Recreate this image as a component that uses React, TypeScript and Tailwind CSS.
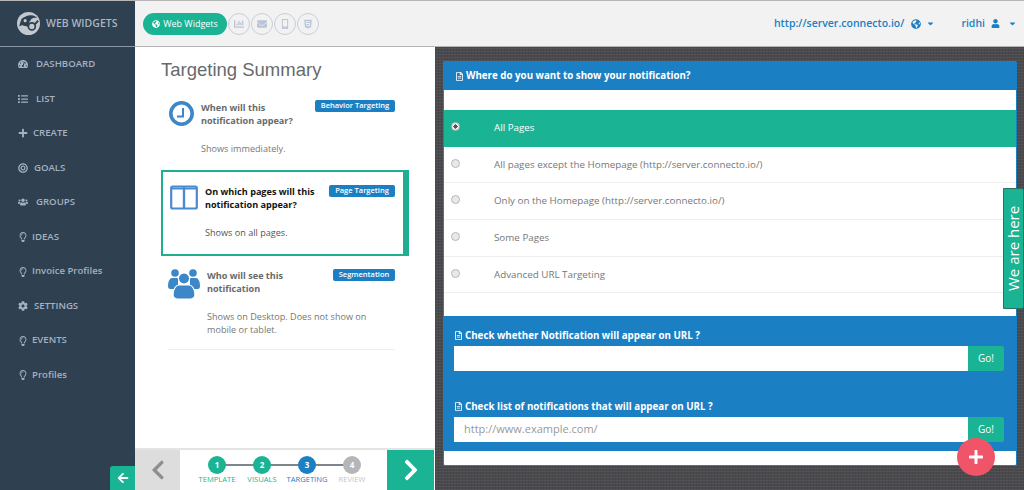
import React from 'react';
import {
  FaArrowLeft, FaBullseye, FaCaretDown, FaChartBar, FaChevronLeft, FaChevronRight, FaCog,
  FaEnvelope, FaGlobeAmericas, FaHtml5, FaList, FaMobileAlt, FaPlus,
  FaRegFileAlt, FaRegLightbulb, FaTachometerAlt, FaUser, FaUsers,
} from 'react-icons/fa';

const NAV = [
  { label: 'DASHBOARD', icon: FaTachometerAlt, gap: 'gap-[8px]' },
  { label: 'LIST', icon: FaList, gap: 'gap-[8px]' },
  { label: 'CREATE', icon: FaPlus, gap: 'gap-[5px]' },
  { label: 'GOALS', icon: FaBullseye, gap: 'gap-[6px]' },
  { label: 'GROUPS', icon: FaUsers, gap: 'gap-[8px]' },
  { label: 'IDEAS', icon: FaRegLightbulb, gap: 'gap-[4px]' },
  { label: 'Invoice Profiles', icon: FaRegLightbulb, gap: 'gap-[4px]' },
  { label: 'SETTINGS', icon: FaCog, gap: 'gap-[6px]' },
  { label: 'EVENTS', icon: FaRegLightbulb, gap: 'gap-[4px]' },
  { label: 'Profiles', icon: FaRegLightbulb, gap: 'gap-[4px]' },
];

const OPTIONS = [
  'All Pages',
  'All pages except the Homepage (http://server.connecto.io/)',
  'Only on the Homepage (http://server.connecto.io/)',
  'Some Pages',
  'Advanced URL Targeting',
];

const STEPS = [
  { n: 1, label: 'TEMPLATE', circle: 'bg-[#1ab394]', text: 'text-[#1ab394]' },
  { n: 2, label: 'VISUALS', circle: 'bg-[#1ab394]', text: 'text-[#1ab394]' },
  { n: 3, label: 'TARGETING', circle: 'bg-[#1b7fc4]', text: 'text-[#1b7fc4]' },
  { n: 4, label: 'REVIEW', circle: 'bg-[#b4b6ba]', text: 'text-[#c4c6ca]' },
];

const Logo = () => (
  <svg width="23" height="23" viewBox="0 0 24 24" className="shrink-0">
    <circle cx="12" cy="12" r="12" fill="#c3c8ce" />
    <path d="M2.5 15C3 8 9 3 15 3.5c3 .3 5 1.5 6 3-3-1-6 0-7 2.5" fill="#2f4050" />
    <circle cx="8.5" cy="10" r="4.6" fill="#2f4050" />
    <path d="M8 13c3 1 4 2 6 2s5-2 8-6" fill="none" stroke="#2f4050" strokeWidth="2" />
    <circle cx="15.5" cy="15" r="3.6" fill="#c3c8ce" stroke="#2f4050" strokeWidth="1.8" />
    <circle cx="8.5" cy="9" r="1.6" fill="#c3c8ce" />
  </svg>
);

const ClockIcon = () => (
  <svg width="25" height="25" viewBox="0 0 25 25" className="shrink-0">
    <circle cx="12.5" cy="12.5" r="10.7" fill="#fff" stroke="#3b87c8" strokeWidth="3.6" />
    <path d="M8 15.6h6V7" fill="none" stroke="#3b87c8" strokeWidth="2" />
  </svg>
);

const PanesIcon = () => (
  <svg width="28" height="25" viewBox="0 0 28 25" className="shrink-0">
    <rect x="1.2" y="1.5" width="25.6" height="22" rx="1.5" fill="#fff" stroke="#4a8ad0" strokeWidth="2.2" />
    <path d="M14 2v21" stroke="#4a8ad0" strokeWidth="2.4" />
    <path d="M1 3.5h26" stroke="#4a8ad0" strokeWidth="2" />
  </svg>
);

const PeopleIcon = () => (
  <svg width="32" height="30" viewBox="0 0 32 30" className="shrink-0">
    <g fill="#3b87c8">
      <circle cx="7" cy="4" r="3.8" />
      <circle cx="25" cy="4" r="3.8" />
      <path d="M0 17c0-5 2-8 4-8h6v11H2c-1 0-2-1-2-3z" />
      <path d="M32 17c0-5-2-8-4-8h-6v11h8c1 0 2-1 2-3z" />
    </g>
    <g fill="#3b87c8" stroke="#fff" strokeWidth="1.2">
      <circle cx="16" cy="9.5" r="5.6" />
      <path d="M5 26c0-6 3-10 6-10h10c3 0 6 4 6 10 0 2-2 4-4 4H9c-2 0-4-2-4-4z" />
    </g>
  </svg>
);

const Sidebar = () => (
  <aside className="w-[135px] shrink-0 bg-[#2f4050] flex flex-col">
    <div className="h-[46px] flex items-center pl-[17px] gap-[6px] border-b border-[#8a96a3] text-[#a9b5c3] text-[10.5px] font-semibold">
      <Logo />
      <span>WEB WIDGETS</span>
    </div>
    <nav className="flex flex-col">
      {NAV.map(({ label, icon: Icon, gap }) => (
        <div key={label} className={`h-[34.55px] flex items-center pl-[18px] text-[9.6px] font-semibold text-[#a3b1c2] ${gap}`}>
          <Icon size={10} className="shrink-0" />
          <span>{label}</span>
        </div>
      ))}
    </nav>
  </aside>
);

const Topbar = () => (
  <header className="h-[46px] shrink-0 bg-[#f2f2f2] border-b border-[#b5b5b5] flex items-center justify-between pl-[8px] pr-[7px]">
    <div className="flex items-center gap-px">
      <div className="h-[22px] w-[84px] rounded-full bg-[#1ab394] text-white text-[9px] flex items-center justify-center gap-[3px]">
        <FaGlobeAmericas size={8} />
        <span>Web Widgets</span>
      </div>
      {[FaChartBar, FaEnvelope, FaMobileAlt, FaHtml5].map((Icon, i) => (
        <div key={i} className="w-[22px] h-[22px] rounded-full border border-[#c8ced8] text-[#b9c4d6] flex items-center justify-center">
          <Icon size={10} />
        </div>
      ))}
    </div>
    <div className="flex items-center text-[#1b7fc4] text-[10.5px] font-semibold">
      <span>http://server.connecto.io/</span>
      <FaGlobeAmericas size={10} className="ml-[7px]" />
      <FaCaretDown size={9} className="ml-[5px]" />
      <span className="ml-[26px]">ridhi</span>
      <FaUser size={9} className="ml-[6px]" />
      <FaCaretDown size={9} className="ml-[8px]" />
    </div>
  </header>
);

const Badge = ({ children, className }: { children: React.ReactNode; className: string }) => (
  <span className={`h-[12px] rounded-[2px] bg-[#1b7fc4] text-white text-[7.5px] font-semibold flex items-center justify-center shrink-0 ${className}`}>
    {children}
  </span>
);

const Summary = () => (
  <div className="flex-1 min-h-0 flex flex-col pt-[12px] pl-[26px] pr-[26px]">
    <h2 className="text-[18.5px] leading-[22px] text-[#676a6c] font-['Liberation_Sans',sans-serif]">Targeting Summary</h2>

    <div className="flex mt-[10px] pl-[8px] pr-[14px] h-[79px] pt-[10px]">
      <ClockIcon />
      <div className="ml-[7px] flex-1">
        <div className="flex justify-between">
          <p className="text-[9.1px] leading-[13px] font-bold text-[#676a6c]">When will this<br />notification appear?</p>
          <Badge className="w-[80px] -mt-[1px]">Behavior Targeting</Badge>
        </div>
        <p className="text-[9.1px] leading-[13px] text-[#777] mt-[15px]">Shows immediately.</p>
      </div>
    </div>

    <div className="w-[248px] h-[86px] border-2 border-r-[6px] border-[#1fae90] flex pl-[7px] pt-[13px] pr-[8px]">
      <PanesIcon />
      <div className="ml-[7px] flex-1">
        <div className="flex justify-between">
          <p className="text-[9.1px] leading-[13px] font-bold text-[#111]">On which pages will this<br />notification appear?</p>
          <Badge className="w-[66px]">Page Targeting</Badge>
        </div>
        <p className="text-[9.1px] leading-[13px] text-[#555] mt-[15px]">Shows on all pages.</p>
      </div>
    </div>

    <div className="w-[227px] ml-[7px] mt-[13px] pb-[13px] border-b border-[#eeeeee] flex">
      <PeopleIcon />
      <div className="ml-[7px] flex-1">
        <div className="flex justify-between">
          <p className="text-[9.1px] leading-[13px] font-bold text-[#676a6c]">Who will see this<br />notification</p>
          <Badge className="w-[62px]">Segmentation</Badge>
        </div>
        <p className="text-[9.1px] leading-[13px] text-[#777] mt-[15px]">Shows on Desktop. Does not show on<br />mobile or tablet.</p>
      </div>
    </div>
  </div>
);

const Stepper = () => (
  <div className="h-[42px] shrink-0 flex border-t-2 border-[#e4e4e4] bg-white pr-px">
    <div className="w-[45px] bg-[#dddddd] text-[#8f8f8f] flex items-center justify-center">
      <FaChevronLeft size={22} />
    </div>
    <div className="flex-1 flex justify-center pl-[2px] relative">
      {STEPS.map((s, i) => (
        <div key={s.n} className="w-[45px] relative flex flex-col items-center pt-[6px]">
          {i < 3 && <div className="absolute top-[14px] left-[22px] w-[45px] h-[2px] bg-[#7d858d]" />}
          <div className={`relative w-[18px] h-[18px] rounded-full text-white text-[8px] font-bold flex items-center justify-center ${s.circle}`}>{s.n}</div>
          <span className={`text-[7.6px] leading-[10px] ${s.text}`}>{s.label}</span>
        </div>
      ))}
    </div>
    <div className="w-[47px] bg-[#1ab394] text-white flex items-center justify-center">
      <FaChevronRight size={24} />
    </div>
  </div>
);

const UrlCheck = ({ title, placeholder }: { title: string; placeholder?: string }) => (
  <div>
    <h3 className="h-[14px] flex items-center gap-[2px] text-white text-[9.75px] font-bold">
      <FaRegFileAlt size={9} />
      {title}
    </h3>
    <div className="flex h-[25px] mt-[3px]">
      <input readOnly placeholder={placeholder} className="flex-1 bg-white px-[10px] text-[11px] placeholder:text-[#999] outline-none" />
      <button className="w-[36px] bg-[#1ab394] text-white text-[10px] rounded-r-[2px]">Go!</button>
    </div>
  </div>
);

const TargetCard = () => (
  <section className="bg-white border border-[#1b7fc4] rounded-[2px] h-[405px] flex flex-col">
    <h3 className="h-[28px] shrink-0 bg-[#1b7fc4] text-white text-[9.75px] font-bold flex items-center gap-[2px] pl-[11px]">
      <FaRegFileAlt size={9} />
      Where do you want to show your notification?
    </h3>
    <div className="h-[20px] shrink-0" />
    {OPTIONS.map((o, i) => (
      <label key={o} className={`h-[36.7px] shrink-0 flex text-[9.8px] border-b ${i === 0 ? 'bg-[#1ab394] text-white border-[#1ab394]' : 'text-[#777] border-[#eeeeee]'}`}>
        <span className="w-[50px] pl-[7px] pt-[12px]">
          <span className={`block w-[9px] h-[9px] rounded-full border border-[#b8b8b8] ${i === 0 ? 'bg-[radial-gradient(circle,#555_40%,#eee_45%)]' : 'bg-[#e8e8e8]'}`} />
        </span>
        <span className="pt-[11px]">{o}</span>
      </label>
    ))}
    <div className="h-[22.5px] shrink-0" />
    <div className="h-[135px] shrink-0 bg-[#1b7fc4] pl-[10px] pr-[12px] pt-[13px] flex flex-col gap-[29px]">
      <UrlCheck title="Check whether Notification will appear on URL ?" />
      <UrlCheck title="Check list of notifications that will appear on URL ?" placeholder="http://www.example.com/" />
    </div>
  </section>
);

export default function App() {
  return (
    <div className="relative w-[1024px] h-[490px] overflow-hidden flex border-t border-[#b5b5b5] font-['Open_Sans',sans-serif]">
      <Sidebar />
      <div className="flex-1 min-w-0 flex flex-col">
        <Topbar />
        <div className="flex-1 min-h-0 flex">
          <div className="w-[300px] shrink-0 bg-white flex flex-col">
            <Summary />
            <Stepper />
          </div>
          <div className="flex-1 bg-[#4a4a4e] bg-[repeating-linear-gradient(0deg,rgba(255,255,255,0.05)_0_1px,transparent_1px_3px),repeating-linear-gradient(90deg,rgba(0,0,0,0.07)_0_1px,transparent_1px_3px)] pl-[8px] pr-[7px] pt-[14px]">
            <TargetCard />
          </div>
        </div>
      </div>

      <button className="absolute left-[110px] bottom-0 w-[25px] h-[24px] bg-[#1ab394] text-white rounded-tl-[3px] flex items-center justify-center">
        <FaArrowLeft size={12} />
      </button>
      <div className="absolute right-0 top-[187px] w-[21px] h-[121px] bg-[#1ab394] border border-[#2f6f60] rounded-l-[2px] text-white text-[15px] flex items-center justify-center [writing-mode:vertical-rl] rotate-180">
        We are here
      </div>
      <button className="absolute left-[957px] top-[437px] w-[38px] h-[38px] rounded-full bg-[#ef5468] text-white flex items-center justify-center">
        <FaPlus size={16} />
      </button>
    </div>
  );
}
